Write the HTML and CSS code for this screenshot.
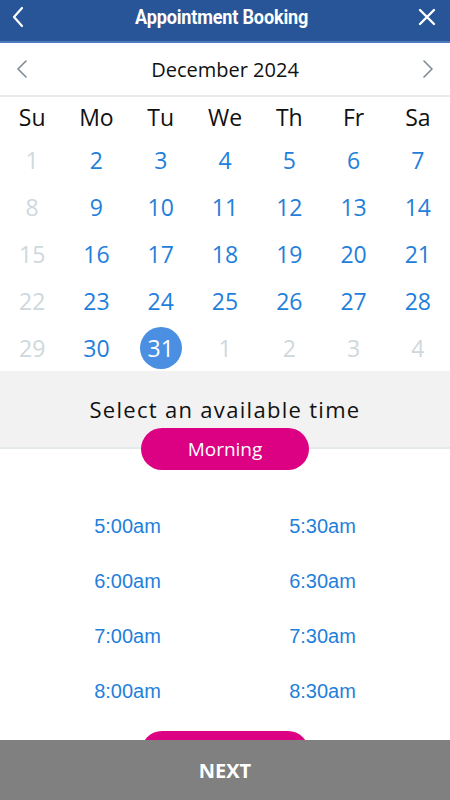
FILE: index.html
```html
<!DOCTYPE html>
<html>
<head>
<meta charset="utf-8">
<link rel="stylesheet" href="styles.css">
</head>
<body>
<div class="app">
  <header class="topbar">
    <span class="icon-btn back">
      <svg width="14" height="22" viewBox="0 0 14 22"><path d="M11 2 L3 11 L11 20" fill="none" stroke="#fff" stroke-width="2.2" stroke-linecap="round" stroke-linejoin="round"/></svg>
    </span>
    <h1 class="title">Appointment Booking</h1>
    <span class="icon-btn close">
      <svg width="18" height="18" viewBox="0 0 18 18"><path d="M2 2 L16 16 M16 2 L2 16" fill="none" stroke="#fff" stroke-width="2.4" stroke-linecap="round"/></svg>
    </span>
  </header>

  <div class="month-nav">
    <span class="chev">
      <svg width="12" height="18" viewBox="0 0 12 18"><path d="M10 1 L2 9 L10 17" fill="none" stroke="#7c8a94" stroke-width="1.6" stroke-linecap="round" stroke-linejoin="round"/></svg>
    </span>
    <span class="month">December 2024</span>
    <span class="chev">
      <svg width="12" height="18" viewBox="0 0 12 18"><path d="M2 1 L10 9 L2 17" fill="none" stroke="#7c8a94" stroke-width="1.6" stroke-linecap="round" stroke-linejoin="round"/></svg>
    </span>
  </div>

  <div class="weekdays">
    <span>Su</span><span>Mo</span><span>Tu</span><span>We</span><span>Th</span><span>Fr</span><span>Sa</span>
  </div>

  <div class="dates">
    <span class="off">1</span><span>2</span><span>3</span><span>4</span><span>5</span><span>6</span><span>7</span>
    <span class="off">8</span><span>9</span><span>10</span><span>11</span><span>12</span><span>13</span><span>14</span>
    <span class="off">15</span><span>16</span><span>17</span><span>18</span><span>19</span><span>20</span><span>21</span>
    <span class="off">22</span><span>23</span><span>24</span><span>25</span><span>26</span><span>27</span><span>28</span>
    <span class="off">29</span><span>30</span><span class="sel"><b>31</b></span><span class="off">1</span><span class="off">2</span><span class="off">3</span><span class="off">4</span>
  </div>

  <section class="select-time">
    <p class="select-label">Select an available time</p>
  </section>
  <div class="pill-row"><span class="pill">Morning</span></div>

  <div class="times">
    <span>5:00am</span><span>5:30am</span>
    <span>6:00am</span><span>6:30am</span>
    <span>7:00am</span><span>7:30am</span>
    <span>8:00am</span><span>8:30am</span>
  </div>
  <div class="pill-row next-pill"><span class="pill"></span></div>

  <footer class="footer">NEXT</footer>
</div>
</body>
</html>
```

FILE: styles.css
```css
* { box-sizing: border-box; }
html, body { margin: 0; padding: 0; }
body {
  width: 450px;
  height: 800px;
  overflow: hidden;
  background: #fff;
  font-family: "Open Sans", "Noto Sans", sans-serif;
}
.app { position: relative; height: 800px; overflow: hidden; }

.topbar {
  height: 43px;
  background: #285597;
  border-bottom: 2px solid #4d7bbd;
  display: flex;
  align-items: center;
  justify-content: space-between;
  padding: 0 14px 0 11px;
}
.icon-btn { display: flex; align-items: center; }
.back { margin-top: -8px; }
.close { margin-top: -8px; }
.title {
  margin: 0;
  color: #fff;
  font-family: Roboto, "Liberation Sans", sans-serif;
  font-weight: 700;
  font-size: 21px;
  transform: scaleX(0.86);
  margin-top: -8px;
  letter-spacing: -0.2px;
}

.month-nav {
  height: 54px;
  border-bottom: 2px solid #e9ecef;
  display: flex;
  align-items: center;
  justify-content: space-between;
  padding: 0 16px 0 16px;
}
.month { font-size: 20px; color: #111; }
.chev { display: flex; align-items: center; }

.weekdays, .dates {
  display: grid;
  grid-template-columns: repeat(7, 1fr);
  text-align: center;
}
.weekdays span {
  height: 40px;
  line-height: 40px;
  font-size: 23px;
  color: #111;
}
.dates span {
  height: 46.8px;
  display: flex;
  align-items: center;
  justify-content: center;
  font-size: 23px;
  color: #1f80db;
}
.dates span.off { color: #cfd8dc; }
.dates span.sel b {
  font-weight: 400;
  width: 42px;
  height: 42px;
  border-radius: 50%;
  background: #4a8fe1;
  color: #fff;
  display: flex;
  align-items: center;
  justify-content: center;
}

.select-time {
  background: #f2f2f2;
  height: 78px;
  border-bottom: 2px solid #e4e9ec;
  padding-top: 23px;
}
.select-label {
  margin: 0;
  text-align: center;
  font-size: 22px;
  letter-spacing: 1.3px;
  color: #111;
}
.pill-row {
  display: flex;
  justify-content: center;
  margin-top: -21px;
  position: relative;
}
.pill {
  width: 168px;
  height: 42px;
  border-radius: 21px;
  background: #dc0082;
  color: #fff;
  font-size: 19px;
  display: flex;
  align-items: center;
  justify-content: center;
}

.times {
  display: grid;
  grid-template-columns: 1fr 1fr;
  padding: 29px 30px 0;
}
.times span {
  height: 55px;
  display: flex;
  align-items: center;
  justify-content: center;
  font-family: "Liberation Sans", Arial, sans-serif;
  font-size: 20px;
  color: #1f80db;
}
.next-pill { margin-top: 12px; }

.footer {
  position: absolute;
  left: 0;
  right: 0;
  bottom: 0;
  height: 60px;
  background: #808080;
  color: #fff;
  font-weight: 700;
  font-size: 20px;
  display: flex;
  align-items: center;
  justify-content: center;
}
```
